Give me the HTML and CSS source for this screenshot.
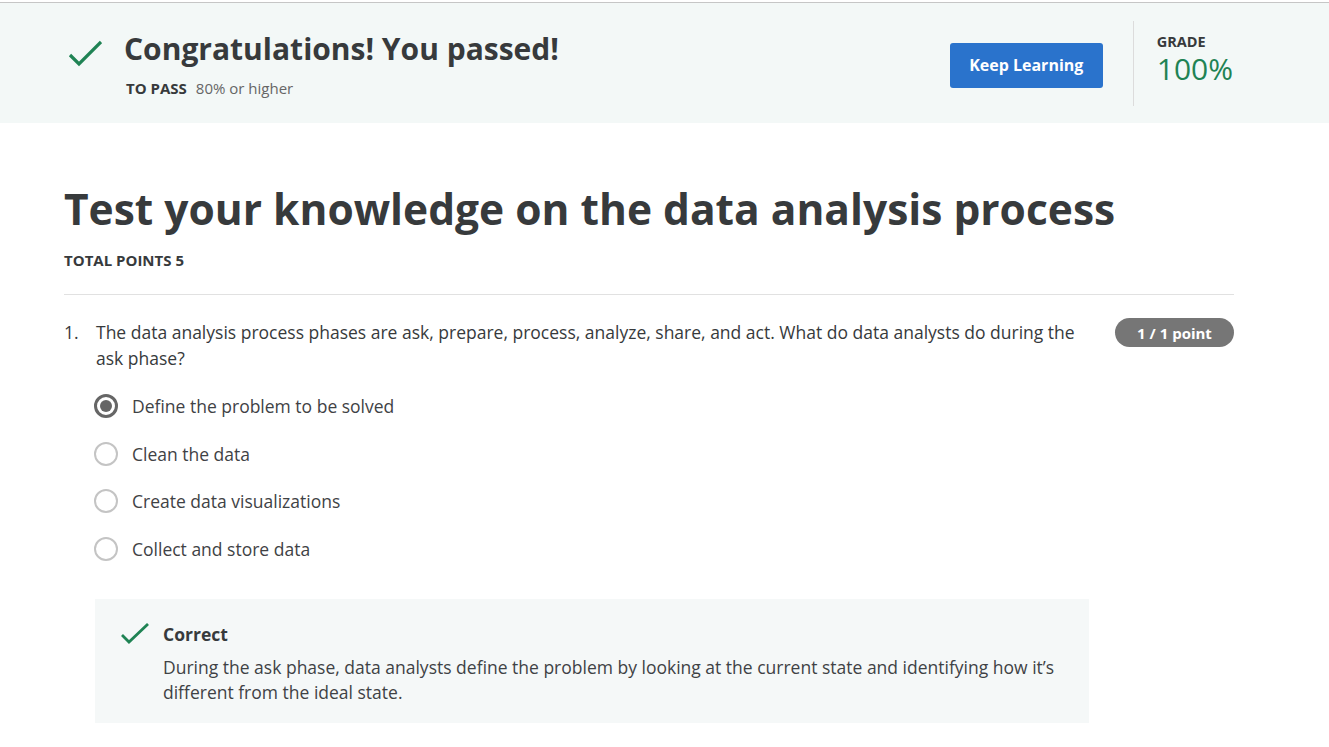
FILE: index.html
```html
<!DOCTYPE html>
<html lang="en">
<head>
<meta charset="utf-8">
<title>Test your knowledge on the data analysis process</title>
<link rel="stylesheet" href="styles.css">
</head>
<body>
<header class="banner">
  <div class="banner-left">
    <svg class="banner-check" width="40" height="30" viewBox="0 0 40 30" aria-hidden="true">
      <path d="M8 18 L17 27 L39 5" fill="none" stroke="#1f8354" stroke-width="3.2"/>
    </svg>
    <div class="banner-text">
      <h2 class="banner-title">Congratulations! You passed!</h2>
      <div class="banner-sub"><span class="label">TO PASS</span><span class="muted">80% or higher</span></div>
    </div>
  </div>
  <button class="btn-primary">Keep Learning</button>
  <div class="vdivider"></div>
  <div class="grade">
    <div class="grade-label">GRADE</div>
    <div class="grade-value">100%</div>
  </div>
</header>

<main class="content">
  <h1 class="title">Test your knowledge on the data analysis process</h1>
  <div class="points">TOTAL POINTS 5</div>
  <hr class="rule">

  <section class="question">
    <div class="q-head">
      <span class="q-num">1.</span>
      <p class="q-text">The data analysis process phases are ask, prepare, process, analyze, share, and act. What do data analysts do during the ask phase?</p>
      <span class="badge">1 / 1 point</span>
    </div>
    <ul class="options">
      <li class="option"><span class="radio checked"></span>Define the problem to be solved</li>
      <li class="option"><span class="radio"></span>Clean the data</li>
      <li class="option"><span class="radio"></span>Create data visualizations</li>
      <li class="option"><span class="radio"></span>Collect and store data</li>
    </ul>
    <div class="feedback">
      <svg class="fb-check" width="30" height="24" viewBox="0 0 30 24" aria-hidden="true">
        <path d="M2 12 L9 19 L28 1" fill="none" stroke="#1f8354" stroke-width="2.8"/>
      </svg>
      <div class="fb-body">
        <div class="fb-title">Correct</div>
        <p class="fb-text">During the ask phase, data analysts define the problem by looking at the current state and identifying how it’s different from the ideal state.</p>
      </div>
    </div>
  </section>
</main>
</body>
</html>
```

FILE: styles.css
```css
* { box-sizing: border-box; }
html, body { margin: 0; padding: 0; background: #fff; }
body {
  font-family: "Open Sans", "Noto Sans", sans-serif;
  color: #373a3c;
  padding-top: 2px;
}

.banner {
  display: flex;
  align-items: center;
  height: 121px;
  background: #f3f8f7;
  border-top: 1px solid #c6c6c6;
  padding: 0 96px 0 62px;
}
.banner-left {
  display: flex;
  align-items: flex-start;
  margin-right: auto;
}
.banner-check { margin-top: 8px; margin-right: 22px; flex: none; }
.banner-title {
  margin: 0;
  font-size: 30px;
  font-weight: 700;
  line-height: 40px;
  color: #373a3c;
}
.banner-sub {
  margin-top: 9px;
  font-size: 15px;
  line-height: 20px;
  padding-left: 2px;
}
.label { font-weight: 700; margin-right: 9px; color: #373a3c; }
.muted { color: #666; }

.btn-primary {
  width: 153px;
  height: 45px;
  border: 0;
  border-radius: 3px;
  background: #2a73cc;
  color: #fff;
  font-family: inherit;
  font-size: 16px;
  font-weight: 700;
  margin-top: 4px;
}
.vdivider {
  width: 1px;
  height: 85px;
  background: #dcdcdc;
  margin: 0 23px 0 30px;
}
.grade {
  display: flex;
  flex-direction: column;
  margin-bottom: 10px;
}
.grade-label {
  font-size: 14.5px;
  font-weight: 700;
  line-height: 20px;
  margin-top: 1px;
}
.grade-value {
  font-size: 30px;
  line-height: 34px;
  color: #1f8354;
}

.content {
  padding: 56px 95px 0 64px;
}
.title {
  margin: 0;
  font-size: 42.5px;
  font-weight: 700;
  line-height: 60px;
  color: #373a3c;
}
.points {
  margin-top: 11px;
  font-size: 15px;
  font-weight: 700;
  line-height: 20px;
}
.rule {
  margin: 24px 0 0;
  border: 0;
  border-top: 1px solid #e1e1e1;
}

.question { padding-top: 24px; }
.q-head { display: flex; align-items: flex-start; }
.q-num { width: 32px; font-size: 17.5px; line-height: 26px; }
.q-text {
  margin: 0;
  flex: 1;
  font-size: 17.5px;
  line-height: 26px;
  padding-right: 30px;
}
.badge {
  margin-top: -1px;
  width: 119px;
  height: 29px;
  border-radius: 15px;
  background: #767676;
  color: #fff;
  font-size: 15px;
  font-weight: 700;
  display: flex;
  align-items: center;
  justify-content: center;
  flex: none;
}

.options {
  list-style: none;
  margin: 23px 0 0;
  padding: 0 0 0 30px;
  display: flex;
  flex-direction: column;
  gap: 23.5px;
}
.option {
  display: flex;
  align-items: center;
  height: 24px;
  font-size: 17.5px;
  color: #3f4245;
}
.radio {
  width: 24px;
  height: 24px;
  border-radius: 50%;
  border: 2px solid #c4c4c4;
  margin-right: 14px;
  flex: none;
  position: relative;
}
.radio.checked {
  border: 3px solid #666;
}
.radio.checked::after {
  content: "";
  position: absolute;
  left: 3px;
  top: 3px;
  width: 12px;
  height: 12px;
  border-radius: 50%;
  background: #666;
}

.feedback {
  margin: 38px 0 0 31px;
  width: 994px;
  background: #f5f8f8;
  display: flex;
  align-items: flex-start;
  padding: 24px 20px 18px 25px;
}
.fb-check { margin-right: 13px; flex: none; }
.fb-title {
  font-size: 17.5px;
  font-weight: 700;
  line-height: 25px;
  margin-top: -1px;
}
.fb-text {
  margin: 8px 0 0;
  font-size: 17.5px;
  line-height: 25px;
  color: #3f4245;
}
```
